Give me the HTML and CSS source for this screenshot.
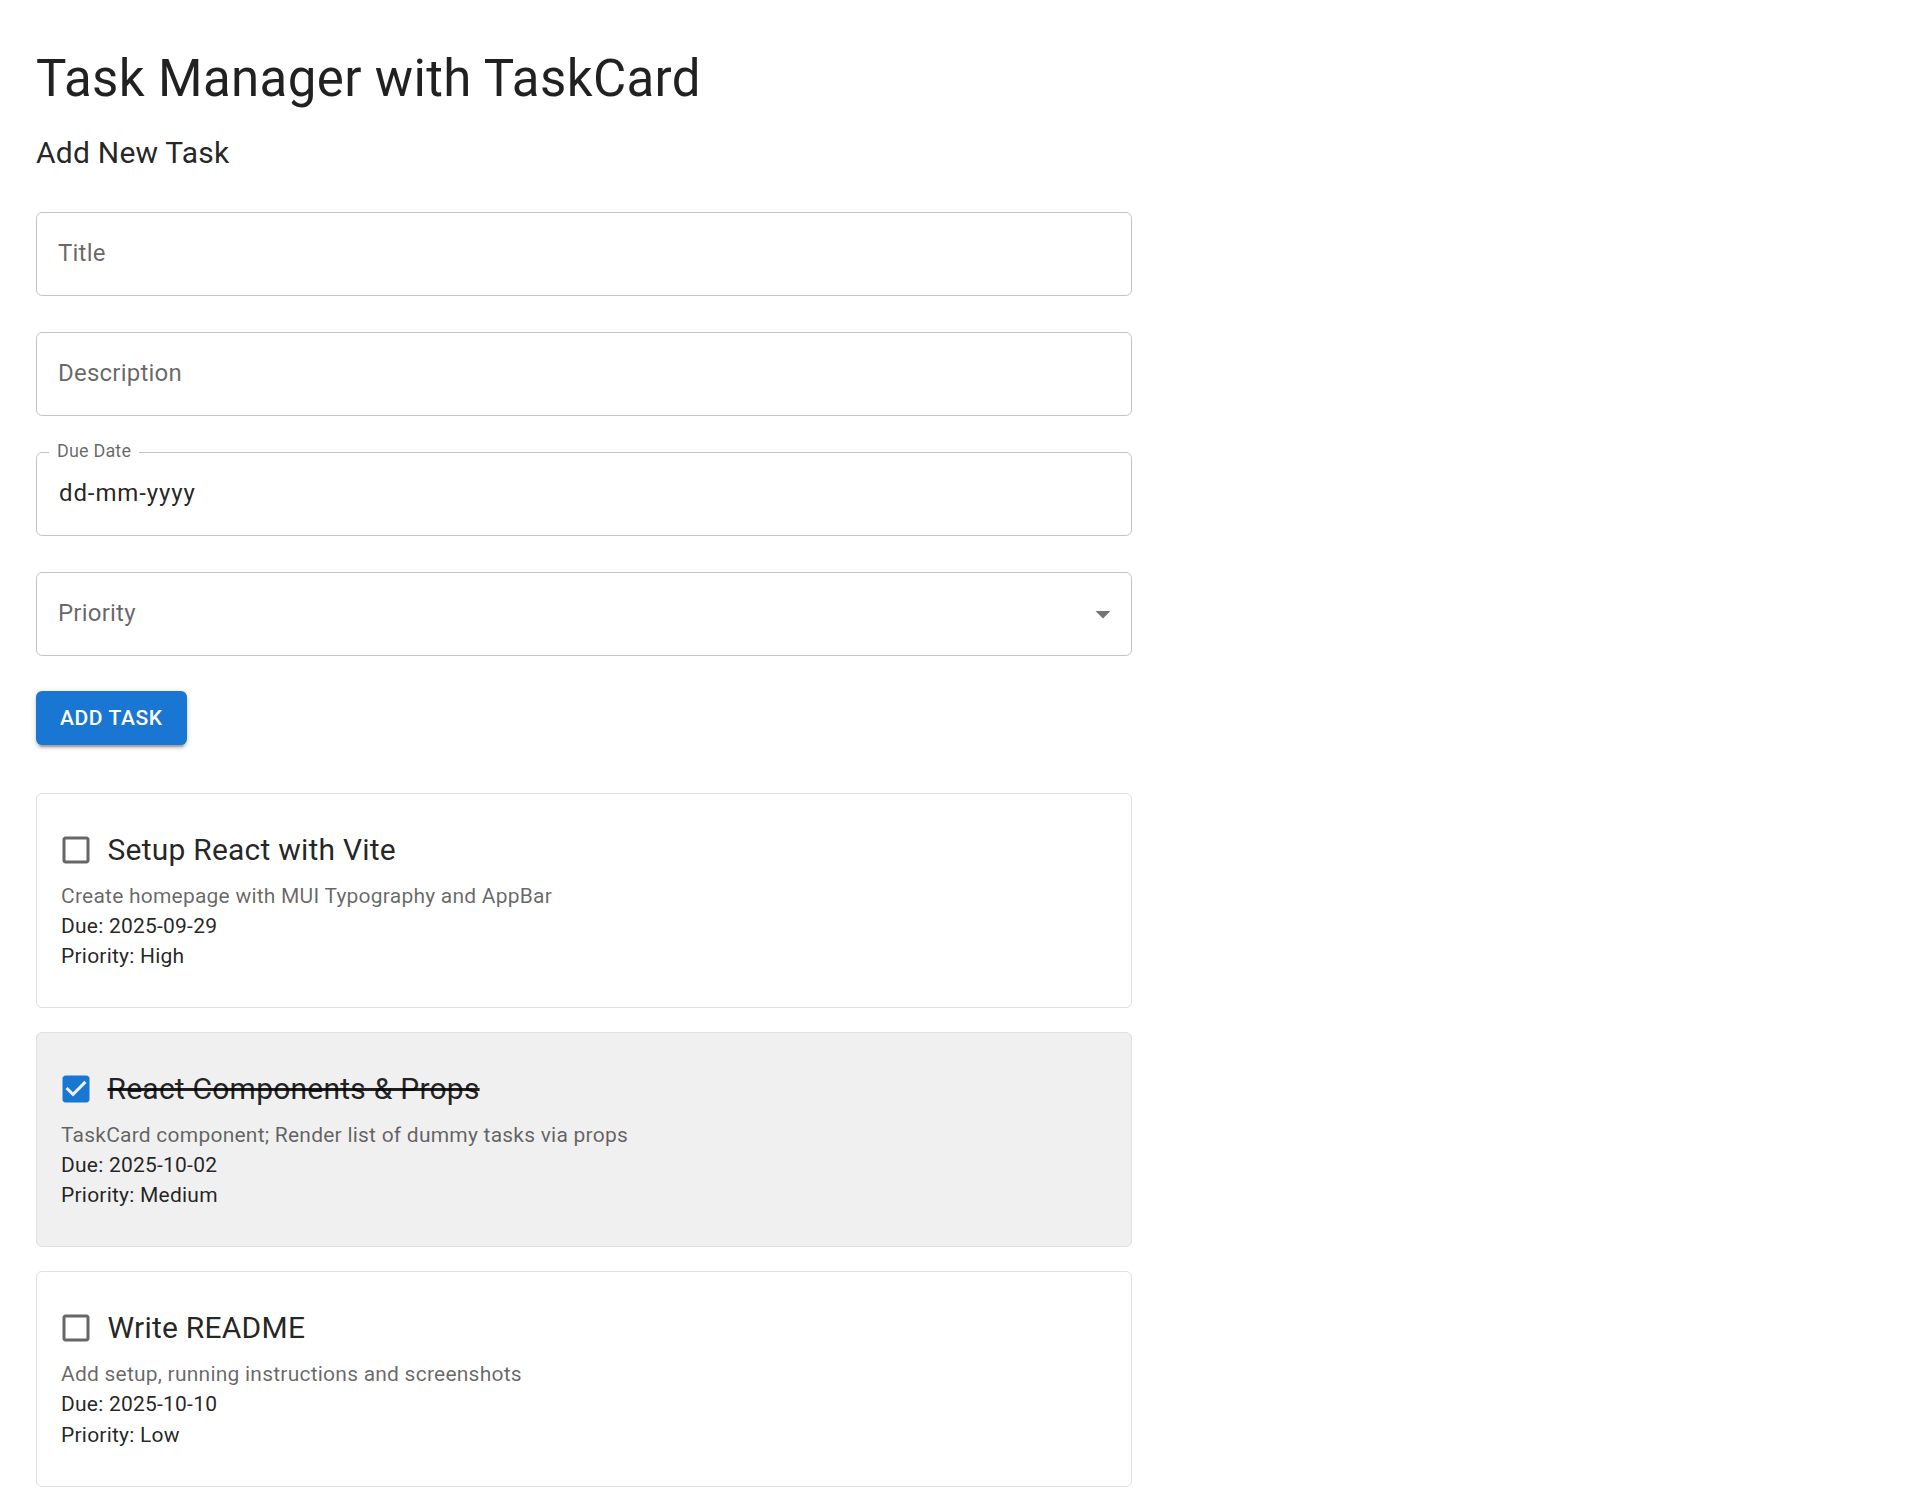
FILE: index.html
```html
<!DOCTYPE html>
<html lang="en">
<head>
<meta charset="utf-8">
<title>Task Manager with TaskCard</title>
<link rel="stylesheet" href="styles.css">
</head>
<body>
<main class="page">
  <h1 class="title">Task Manager with TaskCard</h1>
  <h2 class="subtitle">Add New Task</h2>

  <form class="task-form">
    <div class="field"><span class="placeholder">Title</span></div>
    <div class="field"><span class="placeholder">Description</span></div>
    <div class="field field-notched">
      <span class="float-label">Due Date</span>
      <span class="value">dd-mm-yyyy</span>
    </div>
    <div class="field field-select">
      <span class="placeholder">Priority</span>
      <svg class="select-arrow" viewBox="0 0 24 24" aria-hidden="true"><path d="M7 10l5 5 5-5z"/></svg>
    </div>
    <button type="button" class="btn-primary">Add Task</button>
  </form>

  <section class="task-list">
    <article class="card">
      <div class="check-row">
        <span class="checkbox">
          <svg viewBox="0 0 24 24" aria-hidden="true"><path d="M19 5v14H5V5h14m0-2H5c-1.11 0-2 .9-2 2v14c0 1.1.89 2 2 2h14c1.1 0 2-.9 2-2V5c0-1.1-.9-2-2-2z"/></svg>
        </span>
        <span class="card-title">Setup React with Vite</span>
      </div>
      <p class="line muted">Create homepage with MUI Typography and AppBar</p>
      <p class="line">Due: 2025-09-29</p>
      <p class="line">Priority: High</p>
    </article>

    <article class="card card-done">
      <div class="check-row">
        <span class="checkbox checked">
          <svg viewBox="0 0 24 24" aria-hidden="true"><path d="M19 3H5c-1.11 0-2 .9-2 2v14c0 1.1.89 2 2 2h14c1.11 0 2-.9 2-2V5c0-1.1-.89-2-2-2zm-9 14l-5-5 1.41-1.41L10 14.17l7.59-7.59L19 8l-9 9z"/></svg>
        </span>
        <span class="card-title">React Components &amp; Props</span>
      </div>
      <p class="line muted">TaskCard component; Render list of dummy tasks via props</p>
      <p class="line">Due: 2025-10-02</p>
      <p class="line">Priority: Medium</p>
    </article>

    <article class="card">
      <div class="check-row">
        <span class="checkbox">
          <svg viewBox="0 0 24 24" aria-hidden="true"><path d="M19 5v14H5V5h14m0-2H5c-1.11 0-2 .9-2 2v14c0 1.1.89 2 2 2h14c1.1 0 2-.9 2-2V5c0-1.1-.9-2-2-2z"/></svg>
        </span>
        <span class="card-title">Write README</span>
      </div>
      <p class="line muted">Add setup, running instructions and screenshots</p>
      <p class="line">Due: 2025-10-10</p>
      <p class="line">Priority: Low</p>
    </article>
  </section>
</main>
</body>
</html>
```

FILE: styles.css
```css
* { box-sizing: border-box; }

html, body {
  margin: 0;
  padding: 0;
  background: #ffffff;
}

body {
  font-family: Roboto, "Noto Sans", "Liberation Sans", sans-serif;
  color: rgba(0, 0, 0, 0.87);
}

.page {
  width: 1132px;
  padding: 47px 0 0 36px;
}

.title {
  margin: 0 0 19px;
  font-size: 51px;
  line-height: 63px;
  font-weight: 400;
  letter-spacing: 0.00735em;
}

.subtitle {
  margin: 0 0 10.5px;
  font-size: 30px;
  line-height: 48px;
  font-weight: 400;
  letter-spacing: 0.0075em;
}

.task-form {
  display: flex;
  flex-direction: column;
  align-items: flex-start;
}

.field {
  position: relative;
  width: 100%;
  height: 84px;
  margin: 24px 0 12px;
  padding: 0 21px;
  border: 1px solid #c4c4c4;
  border-radius: 6px;
  display: flex;
  align-items: center;
  font-size: 24px;
  line-height: 34.5px;
}

.placeholder {
  color: rgba(0, 0, 0, 0.6);
  letter-spacing: 0.00938em;
}

.value {
  color: rgba(0, 0, 0, 0.87);
  padding-left: 1px;
  letter-spacing: 0.9px;
}

.float-label {
  position: absolute;
  top: -11px;
  left: 12px;
  padding: 0 8px;
  background: #ffffff;
  font-size: 18px;
  line-height: 18px;
  color: rgba(0, 0, 0, 0.6);
  letter-spacing: 0.00938em;
}

.field-select {
  justify-content: space-between;
  padding-right: 10.5px;
}

.select-arrow {
  width: 36px;
  height: 36px;
  fill: rgba(0, 0, 0, 0.54);
}

.btn-primary {
  margin-top: 23px;
  height: 54.75px;
  padding: 0 24px;
  border: 0;
  border-radius: 6px;
  background: #1976d2;
  color: #ffffff;
  font-family: Roboto, "Noto Sans", "Liberation Sans", sans-serif;
  font-size: 21px;
  font-weight: 500;
  letter-spacing: 0.02857em;
  text-transform: uppercase;
  box-shadow: 0 4.5px 1.5px -3px rgba(0, 0, 0, 0.2),
              0 3px 3px 0 rgba(0, 0, 0, 0.14),
              0 1.5px 7.5px 0 rgba(0, 0, 0, 0.12);
}

.task-list {
  margin-top: 48px;
  width: 1096px;
  display: flex;
  flex-direction: column;
  gap: 24px;
}

.card {
  border: 1px solid #e0e0e0;
  border-radius: 6px;
  background: #ffffff;
  padding: 24px 24px 36px;
}

.card-done {
  background: #f0f0f0;
}

.check-row {
  display: flex;
  align-items: center;
  margin-left: -16.5px;
  height: 63px;
}

.checkbox {
  display: inline-flex;
  padding: 13.5px;
}

.checkbox svg {
  width: 36px;
  height: 36px;
  fill: rgba(0, 0, 0, 0.6);
}

.checkbox.checked svg {
  fill: #1976d2;
}

.card-title {
  font-size: 30px;
  line-height: 48px;
  font-weight: 400;
  letter-spacing: 0.0075em;
}

.card-done .card-title {
  text-decoration: line-through;
}

.line {
  margin: 0;
  font-size: 21px;
  line-height: 30.03px;
  letter-spacing: 0.01071em;
}

.muted {
  color: rgba(0, 0, 0, 0.6);
}
```
